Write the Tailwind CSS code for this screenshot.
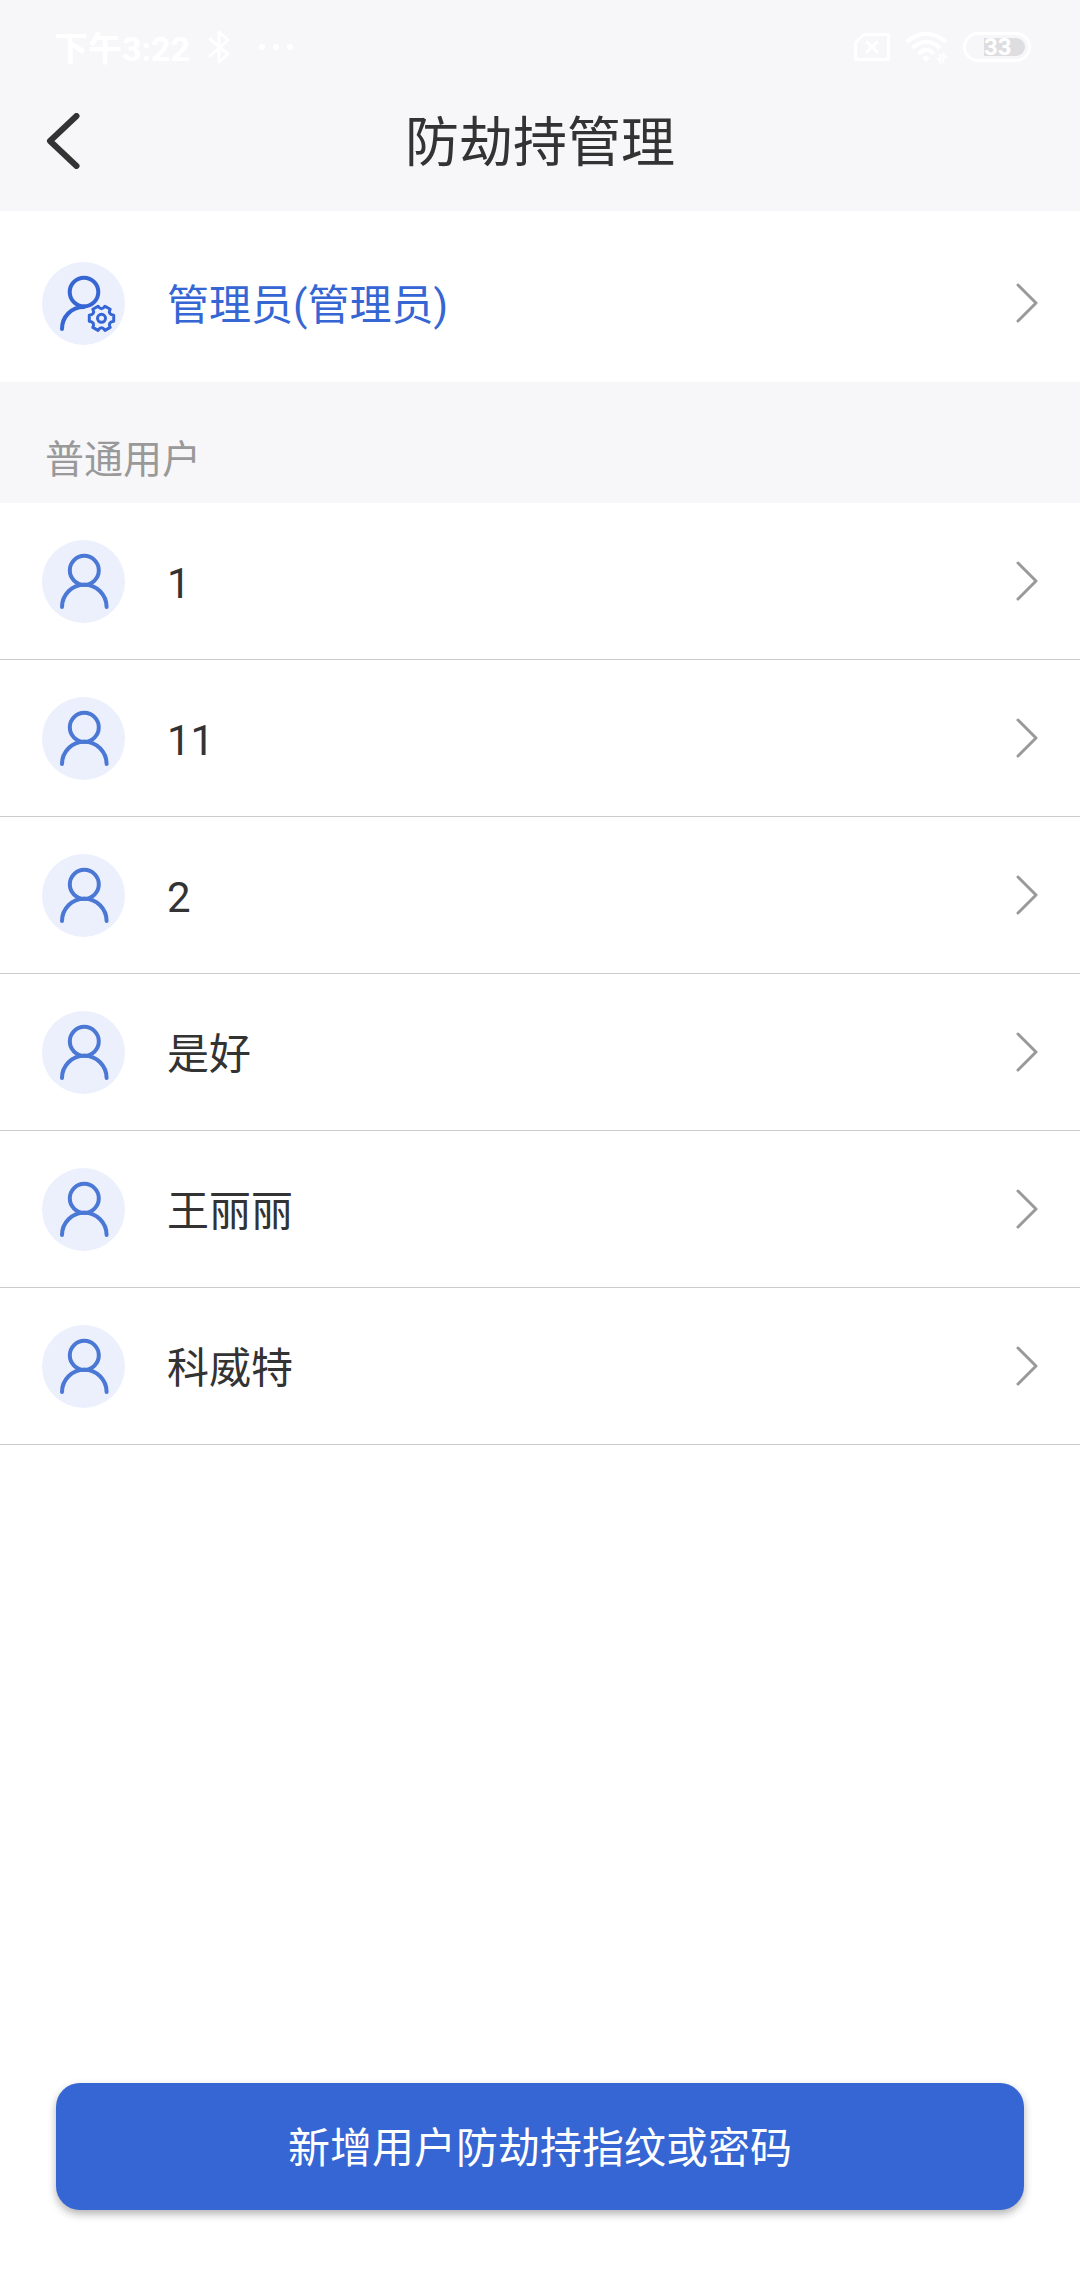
<!DOCTYPE html>
<html lang="zh-CN" class="h-full">
<head>
    <meta charset="UTF-8">
    <meta name="viewport" content="width=device-width, initial-scale=1.0">
    <title>防劫持管理</title>
    <script src="https://cdn.jsdelivr.net/npm/@tailwindcss/browser@4"></script>
</head>
<body class="min-h-screen flex flex-col bg-white text-[#333333] font-[Roboto,'Noto_Sans_CJK_SC',sans-serif]">
    <!-- Shared icons -->
    <svg class="hidden" xmlns="http://www.w3.org/2000/svg">
        <symbol id="icon-user" viewBox="0 0 84 84">
            <circle cx="41.5" cy="42.5" r="41.5" fill="#ebf0fc" />
            <g fill="none" stroke="#4b78d5" stroke-width="4" stroke-linecap="round">
                <circle cx="42.3" cy="31.3" r="14.5" />
                <path d="M20 68A22.3 22.3 0 0 1 64.6 68" />
            </g>
        </symbol>
        <symbol id="icon-next" viewBox="0 0 22 40">
            <path d="M2 2L20 20L2 38" fill="none" stroke="#999999" stroke-width="3" stroke-linecap="round" stroke-linejoin="round" />
        </symbol>
    </svg>

    <header class="bg-[#f7f7f9]">
        <!-- Status bar -->
        <div class="flex items-center justify-between pt-6 pl-[54px] pr-[49px] text-white">
            <div class="flex items-center h-[46px]">
                <span class="pt-1 text-[34px] leading-[46px] font-bold">下午3:22</span>
                <svg class="ml-[18px] w-[22px] h-[34px]" viewBox="0 0 22 34" fill="none" stroke="currentColor" stroke-width="3" stroke-linejoin="round" stroke-linecap="round">
                    <path d="M2 9L20 24L11 32V2L20 10L2 26" />
                </svg>
                <svg class="ml-7 w-[36px] h-[8px]" viewBox="0 0 36 8" fill="currentColor">
                    <circle cx="4" cy="4" r="3" />
                    <circle cx="18" cy="4" r="3" />
                    <circle cx="32" cy="4" r="3" />
                </svg>
            </div>
            <div class="flex items-center h-[46px]">
                <svg class="w-[36px] h-[28px]" viewBox="0 0 36 28" fill="none" stroke="currentColor" stroke-width="3" stroke-linejoin="round" stroke-linecap="round">
                    <path d="M10 1.5H34.5V26.5H1.5V9.5Z" />
                    <path d="M13 9L23 19M23 9L13 19" />
                </svg>
                <svg class="ml-[15px] w-[43px] h-[33px]" viewBox="0 0 43 33" fill="none" stroke="currentColor" stroke-width="4">
                    <path d="M1.5 11Q21 -5.5 41 11" />
                    <path d="M7.5 17Q21 4.5 35 17" />
                    <path d="M13.5 23Q21 14.5 29 23" />
                    <path d="M17 27Q21 23 25 27L21 31Z" fill="currentColor" stroke="none" />
                    <path d="M35.5 33V23M38.5 22V32" stroke-width="2" />
                    <path d="M31 27H36V32ZM43 27H38V22Z" fill="currentColor" stroke="none" />
                </svg>
                <div class="ml-[15px] w-[68px] h-[30px] rounded-full border-3 border-white p-[3px] flex justify-end">
                    <div class="w-[41px] h-[18px] rounded-r-full bg-[#dedee0] text-[24px] leading-[18px] font-bold">33</div>
                </div>
            </div>
        </div>

        <!-- Title bar -->
        <div class="grid grid-cols-[1fr_auto_1fr] items-center h-[141px]">
            <button type="button" aria-label="返回" class="justify-self-start pl-[46px] pr-6">
                <svg class="w-[34px] h-[56px]" viewBox="0 0 34 56" fill="none" stroke="currentColor" stroke-width="6" stroke-linecap="round" stroke-linejoin="round">
                    <path d="M30.5 3L4 28L30.5 53" />
                </svg>
            </button>
            <h1 class="pt-[6px] text-[54px] leading-[72px]">防劫持管理</h1>
        </div>
    </header>

    <main>
        <a href="#" class="flex items-center pt-[50px] pb-[37px] px-[42px] text-[#3566d4]">
            <svg class="w-[84px] h-[84px]" viewBox="0 0 84 84">
                <circle cx="41.5" cy="42.5" r="41.5" fill="#ebf0fc" />
                <g fill="none" stroke="currentColor" stroke-width="4" stroke-linecap="round" stroke-linejoin="round">
                    <circle cx="42" cy="31" r="14.3" />
                    <path d="M20 68C20 56 29 46 42 46" />
                    <g transform="translate(59.5 57.3)" stroke-width="3">
                        <path d="M12.2 -3Q12.2 0 12.2 3Q6 4 8.7 9.1Q6.100 10.600 3.5 12.100Q0 7 -3.5 12.100Q-6.100 10.600 -8.700 9.100Q-6 4 -12.200 3Q-12.200 0 -12.200 -3Q-6 -4 -8.700 -9.100Q-6.100 -10.600 -3.500 -12.100Q0 -7 3.500 -12.100Q6.100 -10.600 8.700 -9.100Q6 -4 12.200 -3Z" />
                        <circle r="4" />
                    </g>
                </g>
            </svg>
            <span class="flex-1 ml-[41px] mt-[6px] text-[42px] leading-[56px]">管理员(管理员)</span>
            <svg class="w-[22px] h-[40px]"><use href="#icon-next" /></svg>
        </a>

        <h2 class="bg-[#f7f7f9] pt-[52px] pb-[17px] px-[45px] text-[39px] leading-[52px] text-[#999999]">普通用户</h2>

        <ul>
            <li class="border-b border-[#cccccc]">
                <a href="#" class="flex items-center py-9 px-[42px]">
                    <svg class="w-[84px] h-[84px]"><use href="#icon-user" /></svg>
                    <span class="flex-1 ml-[41px] mt-[6px] text-[42px] leading-[56px]">1</span>
                    <svg class="w-[22px] h-[40px]"><use href="#icon-next" /></svg>
                </a>
            </li>
            <li class="border-b border-[#cccccc]">
                <a href="#" class="flex items-center py-9 px-[42px]">
                    <svg class="w-[84px] h-[84px]"><use href="#icon-user" /></svg>
                    <span class="flex-1 ml-[41px] mt-[6px] text-[42px] leading-[56px]">11</span>
                    <svg class="w-[22px] h-[40px]"><use href="#icon-next" /></svg>
                </a>
            </li>
            <li class="border-b border-[#cccccc]">
                <a href="#" class="flex items-center py-9 px-[42px]">
                    <svg class="w-[84px] h-[84px]"><use href="#icon-user" /></svg>
                    <span class="flex-1 ml-[41px] mt-[6px] text-[42px] leading-[56px]">2</span>
                    <svg class="w-[22px] h-[40px]"><use href="#icon-next" /></svg>
                </a>
            </li>
            <li class="border-b border-[#cccccc]">
                <a href="#" class="flex items-center py-9 px-[42px]">
                    <svg class="w-[84px] h-[84px]"><use href="#icon-user" /></svg>
                    <span class="flex-1 ml-[41px] mt-[6px] text-[42px] leading-[56px]">是好</span>
                    <svg class="w-[22px] h-[40px]"><use href="#icon-next" /></svg>
                </a>
            </li>
            <li class="border-b border-[#cccccc]">
                <a href="#" class="flex items-center py-9 px-[42px]">
                    <svg class="w-[84px] h-[84px]"><use href="#icon-user" /></svg>
                    <span class="flex-1 ml-[41px] mt-[6px] text-[42px] leading-[56px]">王丽丽</span>
                    <svg class="w-[22px] h-[40px]"><use href="#icon-next" /></svg>
                </a>
            </li>
            <li class="border-b border-[#cccccc]">
                <a href="#" class="flex items-center py-9 px-[42px]">
                    <svg class="w-[84px] h-[84px]"><use href="#icon-user" /></svg>
                    <span class="flex-1 ml-[41px] mt-[6px] text-[42px] leading-[56px]">科威特</span>
                    <svg class="w-[22px] h-[40px]"><use href="#icon-next" /></svg>
                </a>
            </li>
        </ul>
    </main>

    <footer class="mt-auto px-14 pt-10 pb-[70px]">
        <button type="button" class="w-full h-[127px] pt-[5px] rounded-[24px] bg-[#3566d4] text-white text-[42px] leading-[56px] shadow-[0_4px_8px_rgba(0,0,0,0.3)]">新增用户防劫持指纹或密码</button>
    </footer>
</body>
</html>
